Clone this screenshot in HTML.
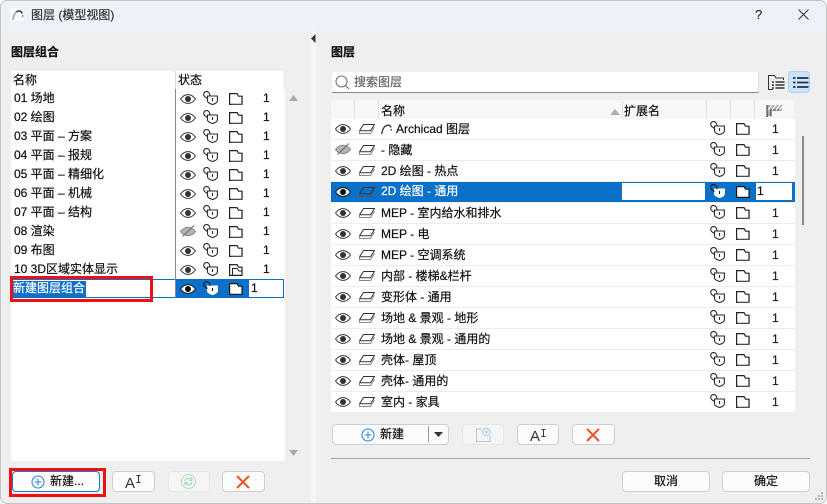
<!DOCTYPE html>
<html><head><meta charset="utf-8">
<style>
html,body{margin:0;padding:0;background:#fff;}
body{width:827px;height:504px;position:relative;overflow:hidden;font:12px/19px "Liberation Sans","Noto Sans CJK SC",sans-serif;color:#111;-webkit-text-stroke:.2px currentColor;}
.a,.t,svg,.b{position:absolute;}
.t{white-space:nowrap;}
svg{overflow:visible;}
.b{box-sizing:border-box;background:#fbfbfb;border:1px solid #cfcfcf;border-radius:4px;text-align:center;}
.r{position:absolute;height:19px;left:0;width:285px;}
.r .t{top:1px;}
.q{position:absolute;left:331px;width:464px;height:20px;background:#fff;border-bottom:1px solid #ececec;}
.q .t{top:1px;left:50px;line-height:19px;}
.q .n{left:441px;color:#222;}
</style></head>
<body>
<svg width="0" height="0" style="position:absolute">
<defs>
<symbol id="e" viewBox="0 0 16 10"><path d="M.5 5C3 1.600 5.500.6 8 .6S13 1.600 15.500 5C13 8.400 10.500 9.400 8 9.400S3 8.400.5 5Z" fill="none" stroke="#333" stroke-width="1"/><circle cx="8" cy="5" r="3" fill="#333"/></symbol>
<symbol id="ew" viewBox="0 0 16 10"><path d="M.5 5C3 1.600 5.500.6 8 .6S13 1.600 15.500 5C13 8.400 10.500 9.400 8 9.400S3 8.400.5 5Z" fill="#fff" stroke="#111" stroke-width="1"/><circle cx="8" cy="5" r="3" fill="#111"/></symbol>
<symbol id="h" viewBox="0 0 16 12"><path d="M.5 6.500C3 3.400 5.500 2.200 8 2.200S13 3.400 15.500 6.500C13 9.600 10.500 10.600 8 10.600S3 9.600.5 6.500Z" fill="#b5b5b5" stroke="#8a8a8a"/><path d="M2.500 11.500 14 .5" stroke="#666" stroke-width="1"/></symbol>
<symbol id="l" viewBox="0 0 15 14"><path d="M4.500 5H14.400V9.800C14.400 11.800 11.500 13 9.500 13.500 7.500 13 4.500 11.800 4.500 9.800Z" fill="none" stroke="#2b2b2b" stroke-width="1.100"/><path d="M4.500 7.500 2 5.800C0 4.300.3 1 3.300.6 5.300.3 7 2 7 5" fill="none" stroke="#2b2b2b" stroke-width="1.100"/><path d="M9.500 7V10" stroke="#2b2b2b" stroke-width="1.100"/></symbol>
<symbol id="lw" viewBox="0 0 15 14"><path d="M4.500 5H14.400V9.800C14.400 11.800 11.500 13 9.500 13.500 7.500 13 4.500 11.800 4.500 9.800Z" fill="#fff" stroke="#fff" stroke-width="1.100"/><path d="M4.500 7.500 2 5.800C0 4.300.3 1 3.300.6 5.300.3 7 2 7 5" fill="none" stroke="#1a1a1a" stroke-width="1.100"/><path d="M9.500 7V10" stroke="#1a1a1a" stroke-width="1.100"/></symbol>
<symbol id="f" viewBox="0 0 14 12"><path d="M.6 11.400V.6H8L9.500 3.200H13V11.400Z" fill="none" stroke="#222" stroke-width="1.200"/><path d="M13.700 4V12H2" fill="none" stroke="#999" stroke-width=".7"/></symbol>
<symbol id="fw" viewBox="0 0 14 12"><path d="M.6 11.400V.6H8L9.500 3.200H13V11.400Z" fill="#fff" stroke="#1a1a1a" stroke-width="1.200"/></symbol>
<symbol id="f2" viewBox="0 0 14 12"><path d="M.6 11.400V.6H8L9.500 3.200H13V11.400Z" fill="none" stroke="#222" stroke-width="1.200"/><path d="M3.500 11.400V4.500H8L10 7H13" fill="none" stroke="#222"/></symbol>
<symbol id="p" viewBox="0 0 16 10"><path d="M.5 6.800 4.500.5H15.500L11.500 6.800Z" fill="none" stroke="#333"/><path d="M.5 6.800V9.500H11.500L15.500 3.200" fill="none" stroke="#888"/></symbol>
<symbol id="pb" viewBox="0 0 16 10"><path d="M.5 6.800 4.500.5H15.500L11.500 6.800Z" fill="none" stroke="#333"/><path d="M.5 6.800V9.500H11.500L15.500 3.200" fill="none" stroke="#555"/></symbol>
<symbol id="x" viewBox="0 0 14 14"><path d="M1 1 13 13M13 1 1 13" stroke="#f0522a" stroke-width="2"/></symbol>
<symbol id="pl" viewBox="0 0 14 14"><circle cx="7" cy="7" r="6" fill="none" stroke="#3b82d8" stroke-width="1.100"/><path d="M7 3.500V10.500M3.500 7H10.500" stroke="#3b82d8" stroke-width="1.100"/></symbol>
<symbol id="ib" viewBox="0 0 5 8"><path d="M.5.5H4.500M.5 7.500H4.500M2.500.5V7.500" fill="none" stroke="#333"/></symbol>
</defs>
</svg>

<!-- window -->
<div class="a" style="left:0;top:0;width:825px;height:502px;background:#efefef;border:1px solid #c4c4c4;border-radius:7px;"></div>
<div class="a" style="left:1px;top:1px;width:825px;height:30px;background:#eef2f8;border-radius:7px 7px 0 0;"></div>
<div class="a" style="left:10px;top:8px;width:14px;height:13px;background:#fafafa;border-radius:2px;"></div>
<svg style="left:12px;top:9px" width="12" height="12" viewBox="0 0 12 12"><path d="M1 11C1.500 6 3 3.500 5 2.500" fill="none" stroke="#aaa" stroke-width="1.800"/><path d="M4.500 2.800C6.500 1.500 9 1.500 10.300 4.500" fill="none" stroke="#444" stroke-width="1.600"/><path d="M10.500 6 10.800 8" stroke="#888" stroke-width="1.500"/></svg>
<div class="t" style="left:31px;top:6px;color:#333;">图层 (模型视图)</div>
<div class="t" style="left:755px;top:5px;color:#333;font-size:13px;">?</div>
<svg style="left:798px;top:9px" width="11" height="11"><path d="M.5.5 10.500 10.500M10.500.5.5 10.500" stroke="#333" stroke-width="1"/></svg>

<!-- splitter -->
<div class="a" style="left:311px;top:31px;width:5px;height:471px;background:#f6f6f6;"></div>
<svg style="left:311px;top:34px" width="5" height="9"><path d="M4.500 0V9L0 4.500Z" fill="#333"/></svg>

<!-- left panel -->
<div class="t" style="left:11px;top:43px;font-weight:bold;">图层组合</div>
<div class="a" style="left:11px;top:71px;width:272px;height:18px;background:#fff;"></div>
<div class="a" style="left:11px;top:89px;width:274px;height:372px;background:#fff;"></div>
<div class="a" style="left:175px;top:71px;width:1px;height:18px;background:#ddd;"></div>
<div class="a" style="left:175px;top:89px;width:1px;height:190px;background:#8a8a8a;"></div>
<div class="t" style="left:13px;top:71px;">名称</div>
<div class="t" style="left:178px;top:71px;">状态</div>
<svg style="left:289px;top:95px" width="9" height="6"><path d="M4.500 0 9 6H0Z" fill="#a8a8a8"/></svg>
<svg style="left:289px;top:450px" width="9" height="6"><path d="M0 0H9L4.500 6Z" fill="#a8a8a8"/></svg>

<div class="r" style="top:88px"><div class="t" style="left:14px">01 场地</div><svg style="left:180px;top:6px" width="16" height="10"><use href="#e"/></svg><svg style="left:203px;top:3px" width="15" height="14"><use href="#l"/></svg><svg style="left:229px;top:5px" width="14" height="12"><use href="#f"/></svg><div class="t" style="left:263px">1</div></div>
<div class="r" style="top:107px"><div class="t" style="left:14px">02 绘图</div><svg style="left:180px;top:6px" width="16" height="10"><use href="#e"/></svg><svg style="left:203px;top:3px" width="15" height="14"><use href="#l"/></svg><svg style="left:229px;top:5px" width="14" height="12"><use href="#f"/></svg><div class="t" style="left:263px">1</div></div>
<div class="r" style="top:126px"><div class="t" style="left:14px">03 平面 – 方案</div><svg style="left:180px;top:6px" width="16" height="10"><use href="#e"/></svg><svg style="left:203px;top:3px" width="15" height="14"><use href="#l"/></svg><svg style="left:229px;top:5px" width="14" height="12"><use href="#f"/></svg><div class="t" style="left:263px">1</div></div>
<div class="r" style="top:145px"><div class="t" style="left:14px">04 平面 – 报规</div><svg style="left:180px;top:6px" width="16" height="10"><use href="#e"/></svg><svg style="left:203px;top:3px" width="15" height="14"><use href="#l"/></svg><svg style="left:229px;top:5px" width="14" height="12"><use href="#f"/></svg><div class="t" style="left:263px">1</div></div>
<div class="r" style="top:164px"><div class="t" style="left:14px">05 平面 – 精细化</div><svg style="left:180px;top:6px" width="16" height="10"><use href="#e"/></svg><svg style="left:203px;top:3px" width="15" height="14"><use href="#l"/></svg><svg style="left:229px;top:5px" width="14" height="12"><use href="#f"/></svg><div class="t" style="left:263px">1</div></div>
<div class="r" style="top:183px"><div class="t" style="left:14px">06 平面 – 机械</div><svg style="left:180px;top:6px" width="16" height="10"><use href="#e"/></svg><svg style="left:203px;top:3px" width="15" height="14"><use href="#l"/></svg><svg style="left:229px;top:5px" width="14" height="12"><use href="#f"/></svg><div class="t" style="left:263px">1</div></div>
<div class="r" style="top:202px"><div class="t" style="left:14px">07 平面 – 结构</div><svg style="left:180px;top:6px" width="16" height="10"><use href="#e"/></svg><svg style="left:203px;top:3px" width="15" height="14"><use href="#l"/></svg><svg style="left:229px;top:5px" width="14" height="12"><use href="#f"/></svg><div class="t" style="left:263px">1</div></div>
<div class="r" style="top:221px"><div class="t" style="left:14px">08 渲染</div><svg style="left:180px;top:4px" width="16" height="12"><use href="#h"/></svg><svg style="left:203px;top:3px" width="15" height="14"><use href="#l"/></svg><svg style="left:229px;top:5px" width="14" height="12"><use href="#f"/></svg><div class="t" style="left:263px">1</div></div>
<div class="r" style="top:240px"><div class="t" style="left:14px">09 布图</div><svg style="left:180px;top:6px" width="16" height="10"><use href="#e"/></svg><svg style="left:203px;top:3px" width="15" height="14"><use href="#l"/></svg><svg style="left:229px;top:5px" width="14" height="12"><use href="#f"/></svg><div class="t" style="left:263px">1</div></div>
<div class="r" style="top:259px"><div class="t" style="left:14px">10 3D区域实体显示</div><svg style="left:180px;top:6px" width="16" height="10"><use href="#e"/></svg><svg style="left:203px;top:3px" width="15" height="14"><use href="#l"/></svg><svg style="left:229px;top:5px" width="14" height="12"><use href="#f2"/></svg><div class="t" style="left:263px">1</div></div>

<!-- editing row -->
<div class="a" style="left:11px;top:279px;width:271px;height:17px;border:1px solid #0a70c8;background:#fff;"></div>
<div class="a" style="left:13px;top:281px;width:73px;height:16px;background:#0a70c8;"></div>
<div class="t" style="left:13px;top:279px;color:#fff;">新建图层组合</div>
<div class="a" style="left:175px;top:279px;width:1px;height:19px;background:#8a8a8a;"></div>
<div class="a" style="left:176px;top:280px;width:73px;height:17px;background:#0a70c8;"></div>
<svg style="left:180px;top:284px" width="16" height="10"><use href="#ew"/></svg>
<svg style="left:203px;top:281px" width="15" height="14"><use href="#lw"/></svg>
<svg style="left:229px;top:283px" width="14" height="12"><use href="#fw"/></svg>
<div class="t" style="left:251px;top:279px;">1</div>
<div class="a" style="left:9.500px;top:275.500px;width:137px;height:20px;border:3px solid #ee0f14;"></div>

<!-- left buttons -->
<div class="b" style="left:12px;top:471px;width:88px;height:21px;border-color:#1877d2;background:#fdfdfd;"></div>
<div class="a" style="left:8.500px;top:467.500px;width:91px;height:23px;border:3px solid #ee0f14;"></div>
<svg style="left:31px;top:475px" width="14" height="14"><use href="#pl"/></svg>
<div class="t" style="left:50px;top:472px;">新建...</div>
<div class="b" style="left:112px;top:471px;width:43px;height:21px;"></div>
<div class="t" style="left:125px;top:476px;font-size:15px;line-height:16px;color:#333;-webkit-text-stroke:0;">A</div>
<svg style="left:136px;top:475px" width="5" height="8"><use href="#ib"/></svg>
<div class="b" style="left:168px;top:471px;width:42px;height:21px;background:#f5f5f5;border-color:#e6e6e6;"></div>
<svg style="left:181px;top:474px" width="15" height="15" viewBox="0 0 15 15"><circle cx="7.500" cy="7.500" r="7" fill="none" stroke="#a8dfb8"/><path d="M4 7C4.500 4.500 8 3.200 10.500 5.500M11 8C10.500 10.500 7 11.800 4.500 9.500" fill="none" stroke="#9cdab0" stroke-width="1.200"/><path d="M11 3.500V6.500H8.500M4 11.500V8.500H6.500" fill="none" stroke="#9cdab0"/></svg>
<div class="b" style="left:222px;top:471px;width:43px;height:21px;"></div>
<svg style="left:236px;top:475px" width="14" height="14"><use href="#x"/></svg>

<!-- right panel -->
<div class="t" style="left:331px;top:43px;font-weight:bold;">图层</div>
<div class="a" style="left:332px;top:72px;width:427px;height:21px;box-sizing:border-box;background:#fff;border-bottom:1px solid #8a8a8a;border-right:1px solid #ddd;"></div>
<svg style="left:335px;top:75px" width="15" height="15"><circle cx="6.500" cy="6.500" r="5.500" fill="none" stroke="#777" stroke-width="1.100"/><path d="M10.500 10.500 14 14" stroke="#777" stroke-width="1.200"/></svg>
<div class="t" style="left:354px;top:73px;color:#666;">搜索图层</div>
<svg style="left:768px;top:75px" width="17" height="15" viewBox="0 0 17 15"><path d="M5 14.500H.5V.5H6.500L8 3H15.500V5" fill="none" stroke="#333"/><path d="M4 7H6M7.500 7H16.500M4 10H6M7.500 10H16.500M4 13H6M7.500 13H16.500" stroke="#333" stroke-width="1.400"/></svg>
<div class="a" style="left:788px;top:71px;width:20px;height:20px;background:#cde4fb;border:1px solid #a5d2f7;border-radius:4px;"></div>
<svg style="left:793px;top:77px" width="16" height="11" viewBox="0 0 16 11"><path d="M0 1H2.500M4 1H15.500M0 5.500H2.500M4 5.500H15.500M0 10H2.500M4 10H15.500" stroke="#1f3048" stroke-width="1.800"/></svg>

<!-- table header -->
<div class="a" style="left:331px;top:100px;width:463px;height:19px;background:#f7f7f7;"></div>
<div class="a" style="left:354px;top:101px;width:1px;height:18px;background:#e2e2e2;"></div>
<div class="a" style="left:378px;top:101px;width:1px;height:18px;background:#e2e2e2;"></div>
<div class="a" style="left:622px;top:101px;width:1px;height:18px;background:#e2e2e2;"></div>
<div class="a" style="left:706px;top:101px;width:1px;height:18px;background:#e2e2e2;"></div>
<div class="a" style="left:730px;top:101px;width:1px;height:18px;background:#e2e2e2;"></div>
<div class="a" style="left:754px;top:101px;width:1px;height:18px;background:#e2e2e2;"></div>
<div class="t" style="left:381px;top:102px;">名称</div>
<svg style="left:610px;top:109px" width="10" height="6"><path d="M5 0 10 6H0Z" fill="#b0b0b0"/></svg>
<div class="t" style="left:624px;top:102px;">扩展名</div>
<svg style="left:766px;top:104px" width="18" height="13" viewBox="0 0 18 13"><path d="M1 12V1H17L15.500 6H5V12Z" fill="#aaa"/><path d="M1 12.500V1M1 12.500H2M5 12.500V6H15.500" fill="none" stroke="#333" stroke-width="1"/><path d="M2 6 6 1M6 6 10 1M10 6 14 1M13.500 6 17 1.500" stroke="#fff" stroke-width="1.200"/></svg>

<!-- table rows -->
<div class="q" style="top:119px"><svg style="left:4px;top:5px" width="16" height="10"><use href="#e"/></svg><svg style="left:28px;top:5px" width="16" height="10"><use href="#p"/></svg><svg style="left:50px;top:5px" width="11" height="10"><path d="M.8 10C1.200 5 3.500 1.500 7 1.200 8.500 1.100 9.500 2 10 3.500M10.200 5 10.400 6.500" fill="none" stroke="#333" stroke-width="1.300"/></svg><div class="t" style="left:65px">Archicad 图层</div><svg style="left:379px;top:2px" width="15" height="14"><use href="#l"/></svg><svg style="left:405px;top:4px" width="14" height="12"><use href="#f"/></svg><div class="t n">1</div></div>
<div class="q" style="top:140px"><svg style="left:4px;top:3px" width="16" height="12"><use href="#h"/></svg><svg style="left:28px;top:5px" width="16" height="10"><use href="#p"/></svg><div class="t">- 隐藏</div><svg style="left:379px;top:2px" width="15" height="14"><use href="#l"/></svg><svg style="left:405px;top:4px" width="14" height="12"><use href="#f"/></svg><div class="t n">1</div></div>
<div class="q" style="top:161px"><svg style="left:4px;top:5px" width="16" height="10"><use href="#e"/></svg><svg style="left:28px;top:5px" width="16" height="10"><use href="#p"/></svg><div class="t">2D 绘图 - 热点</div><svg style="left:379px;top:2px" width="15" height="14"><use href="#l"/></svg><svg style="left:405px;top:4px" width="14" height="12"><use href="#f"/></svg><div class="t n">1</div></div>

<div class="a" style="left:331px;top:182px;width:464px;height:20px;background:#0a70c8;"></div>
<svg style="left:335px;top:187px" width="16" height="10"><use href="#ew"/></svg>
<svg style="left:359px;top:187px" width="16" height="10"><use href="#pb"/></svg>
<div class="t" style="left:381px;top:182px;color:#fff;">2D 绘图 - 通用</div>
<div class="a" style="left:622px;top:183px;width:83px;height:17px;background:#fff;"></div>
<svg style="left:710px;top:184px" width="15" height="14"><use href="#lw"/></svg>
<svg style="left:736px;top:186px" width="14" height="12"><use href="#fw"/></svg>
<div class="a" style="left:756px;top:183px;width:36px;height:17px;background:#fff;"></div>
<div class="t" style="left:757px;top:182px;">1</div>

<div class="q" style="top:203px"><svg style="left:4px;top:5px" width="16" height="10"><use href="#e"/></svg><svg style="left:28px;top:5px" width="16" height="10"><use href="#p"/></svg><div class="t">MEP - 室内给水和排水</div><svg style="left:379px;top:2px" width="15" height="14"><use href="#l"/></svg><svg style="left:405px;top:4px" width="14" height="12"><use href="#f"/></svg><div class="t n">1</div></div>
<div class="q" style="top:224px"><svg style="left:4px;top:5px" width="16" height="10"><use href="#e"/></svg><svg style="left:28px;top:5px" width="16" height="10"><use href="#p"/></svg><div class="t">MEP - 电</div><svg style="left:379px;top:2px" width="15" height="14"><use href="#l"/></svg><svg style="left:405px;top:4px" width="14" height="12"><use href="#f"/></svg><div class="t n">1</div></div>
<div class="q" style="top:245px"><svg style="left:4px;top:5px" width="16" height="10"><use href="#e"/></svg><svg style="left:28px;top:5px" width="16" height="10"><use href="#p"/></svg><div class="t">MEP - 空调系统</div><svg style="left:379px;top:2px" width="15" height="14"><use href="#l"/></svg><svg style="left:405px;top:4px" width="14" height="12"><use href="#f"/></svg><div class="t n">1</div></div>
<div class="q" style="top:266px"><svg style="left:4px;top:5px" width="16" height="10"><use href="#e"/></svg><svg style="left:28px;top:5px" width="16" height="10"><use href="#p"/></svg><div class="t">内部 - 楼梯&amp;栏杆</div><svg style="left:379px;top:2px" width="15" height="14"><use href="#l"/></svg><svg style="left:405px;top:4px" width="14" height="12"><use href="#f"/></svg><div class="t n">1</div></div>
<div class="q" style="top:287px"><svg style="left:4px;top:5px" width="16" height="10"><use href="#e"/></svg><svg style="left:28px;top:5px" width="16" height="10"><use href="#p"/></svg><div class="t">变形体 - 通用</div><svg style="left:379px;top:2px" width="15" height="14"><use href="#l"/></svg><svg style="left:405px;top:4px" width="14" height="12"><use href="#f"/></svg><div class="t n">1</div></div>
<div class="q" style="top:308px"><svg style="left:4px;top:5px" width="16" height="10"><use href="#e"/></svg><svg style="left:28px;top:5px" width="16" height="10"><use href="#p"/></svg><div class="t">场地 &amp; 景观 - 地形</div><svg style="left:379px;top:2px" width="15" height="14"><use href="#l"/></svg><svg style="left:405px;top:4px" width="14" height="12"><use href="#f"/></svg><div class="t n">1</div></div>
<div class="q" style="top:329px"><svg style="left:4px;top:5px" width="16" height="10"><use href="#e"/></svg><svg style="left:28px;top:5px" width="16" height="10"><use href="#p"/></svg><div class="t">场地 &amp; 景观 - 通用的</div><svg style="left:379px;top:2px" width="15" height="14"><use href="#l"/></svg><svg style="left:405px;top:4px" width="14" height="12"><use href="#f"/></svg><div class="t n">1</div></div>
<div class="q" style="top:350px"><svg style="left:4px;top:5px" width="16" height="10"><use href="#e"/></svg><svg style="left:28px;top:5px" width="16" height="10"><use href="#p"/></svg><div class="t">壳体- 屋顶</div><svg style="left:379px;top:2px" width="15" height="14"><use href="#l"/></svg><svg style="left:405px;top:4px" width="14" height="12"><use href="#f"/></svg><div class="t n">1</div></div>
<div class="q" style="top:371px"><svg style="left:4px;top:5px" width="16" height="10"><use href="#e"/></svg><svg style="left:28px;top:5px" width="16" height="10"><use href="#p"/></svg><div class="t">壳体- 通用的</div><svg style="left:379px;top:2px" width="15" height="14"><use href="#l"/></svg><svg style="left:405px;top:4px" width="14" height="12"><use href="#f"/></svg><div class="t n">1</div></div>
<div class="q" style="top:392px;border-bottom:0"><svg style="left:4px;top:5px" width="16" height="10"><use href="#e"/></svg><svg style="left:28px;top:5px" width="16" height="10"><use href="#p"/></svg><div class="t">室内 - 家具</div><svg style="left:379px;top:2px" width="15" height="14"><use href="#l"/></svg><svg style="left:405px;top:4px" width="14" height="12"><use href="#f"/></svg><div class="t n">1</div></div>

<!-- scrollbar -->
<div class="a" style="left:802px;top:136px;width:2px;height:89px;background:#8a8a8a;"></div>

<!-- right buttons -->
<div class="b" style="left:332px;top:424px;width:117px;height:21px;"></div>
<svg style="left:361px;top:428px" width="14" height="14"><use href="#pl"/></svg>
<div class="t" style="left:380px;top:425px;">新建</div>
<div class="a" style="left:428px;top:426px;width:1px;height:16px;background:#999;"></div>
<svg style="left:434px;top:432px" width="9" height="5"><path d="M0 0H9L4.500 5Z" fill="#333"/></svg>
<div class="b" style="left:462px;top:424px;width:42px;height:21px;background:#f5f5f5;border-color:#e6e6e6;"></div>
<svg style="left:476px;top:428px" width="15" height="14" viewBox="0 0 15 14"><path d="M6 1H.5V13.500H14V8" fill="none" stroke="#c4c4c4"/><circle cx="10.500" cy="4" r="3.800" fill="none" stroke="#a9c8ec"/><path d="M10.500 2V6M8.500 4H12.500" stroke="#a9c8ec"/></svg>
<div class="b" style="left:517px;top:424px;width:42px;height:21px;"></div>
<div class="t" style="left:530px;top:429px;font-size:15px;line-height:16px;color:#333;-webkit-text-stroke:0;">A</div>
<svg style="left:541px;top:429px" width="5" height="8"><use href="#ib"/></svg>
<div class="b" style="left:572px;top:424px;width:43px;height:21px;"></div>
<svg style="left:586px;top:428px" width="14" height="14"><use href="#x"/></svg>

<div class="a" style="left:331px;top:458px;width:479px;height:1px;background:#a5a5a5;"></div>
<div class="b" style="left:622px;top:471px;width:88px;height:21px;line-height:19px;">取消</div>
<div class="b" style="left:722px;top:471px;width:88px;height:21px;line-height:19px;">确定</div>

<svg style="left:815px;top:492px" width="9" height="9"><path d="M6 0h2v2H6zM3 3h2v2H3zM6 3h2v2H6zM0 6h2v2H0zM3 6h2v2H3zM6 6h2v2H6z" fill="#b5b5b5"/></svg>
</body></html>
